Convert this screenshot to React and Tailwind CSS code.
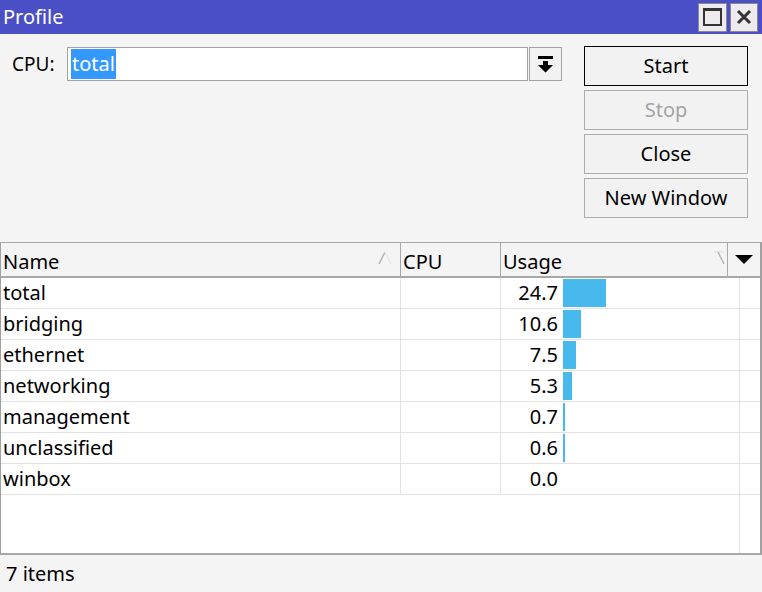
import React from 'react';

const rows = [
    { name: 'total', usage: 24.7 },
    { name: 'bridging', usage: 10.6 },
    { name: 'ethernet', usage: 7.5 },
    { name: 'networking', usage: 5.3 },
    { name: 'management', usage: 0.7 },
    { name: 'unclassified', usage: 0.6 },
    { name: 'winbox', usage: 0.0 },
];

const font = { fontFamily: '"Noto Sans", "Open Sans", sans-serif' };

function WinButton({ children, muted, focused }) {
    return (
        <button
            className={
                'h-[40px] w-[164px] bg-[#f3f2f3] text-[20px] leading-none ' +
                (focused ? 'border border-black ' : 'border border-[#adadad] ') +
                (muted ? 'text-[#a3a3a3]' : 'text-black')
            }
        >
            {children}
        </button>
    );
}

export default function App() {
    return (
        <div className="w-[762px] h-[592px] bg-[#f4f4f4] flex flex-col overflow-hidden text-black" style={font}>
            {/* title bar */}
            <div className="h-[34px] bg-[#4b4fc5] flex items-center justify-between pl-[3px] pr-[4px]">
                <span className="text-white text-[20px] leading-none pb-[1px]">Profile</span>
                <div className="flex gap-[3px] items-center">
                    <div className="w-[29px] h-[29px] bg-[#eeeaee] border border-[#8a8a8a] flex items-center justify-center">
                        <div className="w-[19px] h-[18px] border-[2.5px] border-[#333] border-t-[3px]"></div>
                    </div>
                    <div className="w-[28px] h-[29px] bg-[#eeeaee] border border-[#8a8a8a] flex items-center justify-center">
                        <svg width="16" height="16" viewBox="0 0 16 16">
                            <path d="M2 2 L14 14 M14 2 L2 14" stroke="#333" strokeWidth="3" />
                        </svg>
                    </div>
                </div>
            </div>

            {/* top form */}
            <div className="h-[208px] flex">
                <div className="flex items-start pt-[13px] pl-[12px]">
                    <span className="text-[19px] leading-[34px] w-[55px]">CPU:</span>
                    <div className="w-[461px] h-[34px] bg-white border border-[#a3a3a3] flex items-center pl-[3px]">
                        <span className="bg-[#3399ff] text-white text-[20px] leading-[30px] h-[30px] px-[1px]">total</span>
                    </div>
                    <div className="ml-[1px] w-[33px] h-[34px] bg-[#f3f2f3] border border-[#a3a3a3] flex items-center justify-center">
                        <svg width="15" height="17" viewBox="0 0 15 17">
                            <rect x="0" y="0" width="15" height="3" fill="#000" />
                            <path d="M5 5 H10 V9 H15 L7.5 16.5 L0 9 H5 Z" fill="#000" />
                        </svg>
                    </div>
                </div>
                <div className="ml-[22px] pt-[12px] flex flex-col gap-[4px]">
                    <WinButton focused>Start</WinButton>
                    <WinButton muted>Stop</WinButton>
                    <WinButton>Close</WinButton>
                    <WinButton>New Window</WinButton>
                </div>
            </div>

            {/* table */}
            <div className="h-[313px] bg-white border-t border-[#a8a8a8] border-r-2 border-r-[#a0a0a0] border-l border-l-[#a0a0a0] border-b-2 border-b-[#a8a8a8] flex flex-col">
                <div className="h-[35px] bg-[#f4f4f4] flex border-b-2 border-[#a8a8a8] text-[20px] leading-none">
                    <div className="w-[400px] border-r border-[#a8a8a8] flex items-end pb-[4px] pl-[2px] relative">
                        Name
                        <svg className="absolute right-[8px] top-[8px]" width="14" height="14" viewBox="0 0 14 14">
                            <path d="M7 1 L1 13" stroke="#b4b4b4" strokeWidth="1.5" />
                            <path d="M7 1 L13 13" stroke="#e6e6e6" strokeWidth="1.5" />
                        </svg>
                    </div>
                    <div className="w-[100px] border-r border-[#a8a8a8] flex items-end pb-[4px] pl-[2px]">CPU</div>
                    <div className="w-[227px] border-r border-[#a8a8a8] flex items-end pb-[4px] pl-[2px] relative">
                        Usage
                        <svg className="absolute right-[2px] top-[8px]" width="12" height="14" viewBox="0 0 12 14">
                            <path d="M1 1 L11 1" stroke="#e6e6e6" strokeWidth="1.5" />
                            <path d="M5 1 L11 13" stroke="#b4b4b4" strokeWidth="1.5" />
                        </svg>
                    </div>
                    <div className="flex-1 flex items-center justify-center">
                        <svg width="18" height="10" viewBox="0 0 18 10">
                            <path d="M0 0 H18 L9 9 Z" fill="#000" />
                        </svg>
                    </div>
                </div>
                <div className="flex-1 flex flex-col">
                    {rows.map((r) => (
                        <div key={r.name} className="h-[31px] flex border-b border-[#e2e2e2] text-[20px]">
                            <div className="w-[400px] border-r border-[#e2e2e2] pl-[2px] leading-[30px]">{r.name}</div>
                            <div className="w-[100px] border-r border-[#e2e2e2]"></div>
                            <div className="w-[239px] border-r border-[#e2e2e2] flex items-center">
                                <span className="w-[57px] text-right leading-[30px]">{r.usage.toFixed(1)}</span>
                                <div className="ml-[5px] h-[28px] flex items-center">
                                    {r.usage > 0 && (
                                        <div
                                            className="h-[28px] bg-[#47b9ec]"
                                            style={{ width: Math.max(2, Math.round(r.usage * 1.74)) + 'px' }}
                                        ></div>
                                    )}
                                </div>
                            </div>
                            <div className="flex-1"></div>
                        </div>
                    ))}
                    <div className="flex-1 flex">
                        <div className="w-[739px] border-r border-[#e2e2e2]"></div>
                    </div>
                </div>
            </div>

            {/* status */}
            <div className="flex-1 flex items-center pl-[6px] text-[20px] leading-none">7 items</div>
        </div>
    );
}
